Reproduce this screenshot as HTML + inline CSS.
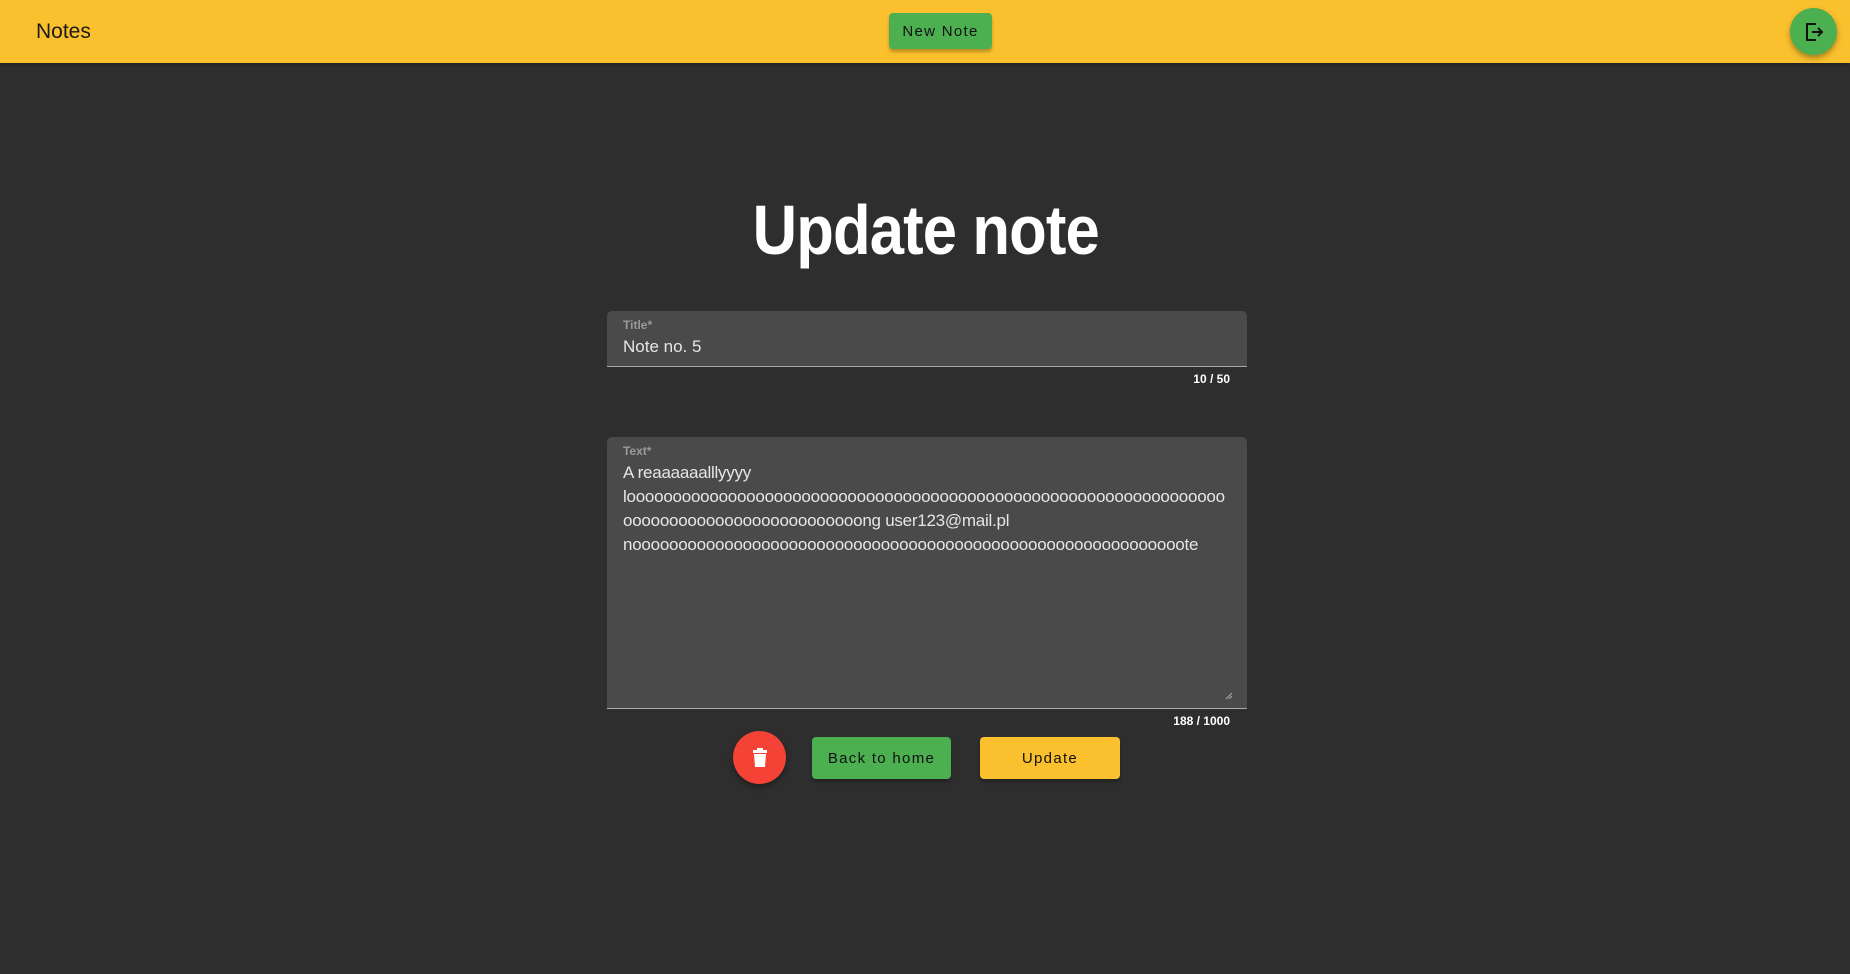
<!DOCTYPE html>
<html><head><meta charset="utf-8"><style>
*{box-sizing:border-box;margin:0;padding:0}
body{width:1850px;height:974px;background:#2e2e2e;font-family:"Liberation Sans",sans-serif;overflow:hidden;position:relative}
.hdr{position:absolute;left:0;top:0;width:1850px;height:63px;background:#fbc02d;box-shadow:0 2px 4px rgba(0,0,0,.3)}
.brand{position:absolute;left:36px;top:20px;font-size:21px;color:#1a1a1a}
.btn{position:absolute;border-radius:4px;font-size:15px;letter-spacing:1.3px;color:#111;display:flex;align-items:center;justify-content:center;box-shadow:0 3px 3px rgba(0,0,0,.25)}
.fab{position:absolute;border-radius:50%;display:flex;align-items:center;justify-content:center;box-shadow:0 3px 6px rgba(0,0,0,.35)}
h1{position:absolute;left:0;width:1852px;text-align:center;top:190px;font-size:70px;font-weight:bold;color:#fff;letter-spacing:-1px}
h1 span{display:inline-block;transform:scaleX(0.88)}
.field{position:absolute;left:607px;width:640px;background:#4a4a4a;border-radius:5px 5px 0 0;border-bottom:1px solid #aaa}
.lbl{position:absolute;left:16px;font-size:12px;color:#9a9a9a;font-weight:bold}
.val{position:absolute;left:16px;font-size:17px;color:#e6e6e6}
.cnt{position:absolute;right:620px;font-size:12px;color:#fff;font-weight:bold}
</style></head><body>
<div class="hdr">
 <div class="brand">Notes</div>
 <div class="btn" style="left:889px;top:13px;width:103px;height:36px;background:#4caf50">New Note</div>
 <div class="fab" style="left:1790px;top:8px;width:47px;height:47px;background:#4caf50">
  <svg width="24" height="24" viewBox="0 0 24 24" fill="none" stroke="#111" stroke-width="2"><path d="M14 4H5v16h9"/><path d="M10 12h10M16 8l4 4-4 4"/></svg>
 </div>
</div>
<h1><span>Update note</span></h1>
<div class="field" style="top:311px;height:56px">
 <div class="lbl" style="top:7px">Title*</div>
 <div class="val" style="top:26px">Note no. 5</div>
</div>
<div class="cnt" style="top:372px">10 / 50</div>
<div class="field" style="top:437px;height:272px">
 <div class="lbl" style="top:7px">Text*</div>
 <div class="val" style="top:24px;line-height:24px;white-space:pre;letter-spacing:-0.25px">A reaaaaaalllyyyy
looooooooooooooooooooooooooooooooooooooooooooooooooooooooooooooooo
oooooooooooooooooooooooooong user123@mail.pl
noooooooooooooooooooooooooooooooooooooooooooooooooooooooooooote</div>
 <svg style="position:absolute;right:14px;bottom:8px" width="8" height="8"><path d="M1 7L7 1M4 7L7 4" stroke="#aaa"/></svg>
</div>
<div class="cnt" style="top:714px">188 / 1000</div>
<div class="fab" style="left:733px;top:731px;width:53px;height:53px;background:#f44336">
 <svg width="18" height="20" viewBox="0 0 18 20"><rect x="2" y="2" width="14" height="3" fill="#fff"/><rect x="6" y="0" width="6" height="3" fill="#fff"/><path d="M3 6h12l-1 13H4z" fill="#fff"/></svg>
</div>
<div class="btn" style="left:812px;top:737px;width:139px;height:42px;background:#4caf50">Back to home</div>
<div class="btn" style="left:980px;top:737px;width:140px;height:42px;background:#fbc02d">Update</div>
</body></html>
